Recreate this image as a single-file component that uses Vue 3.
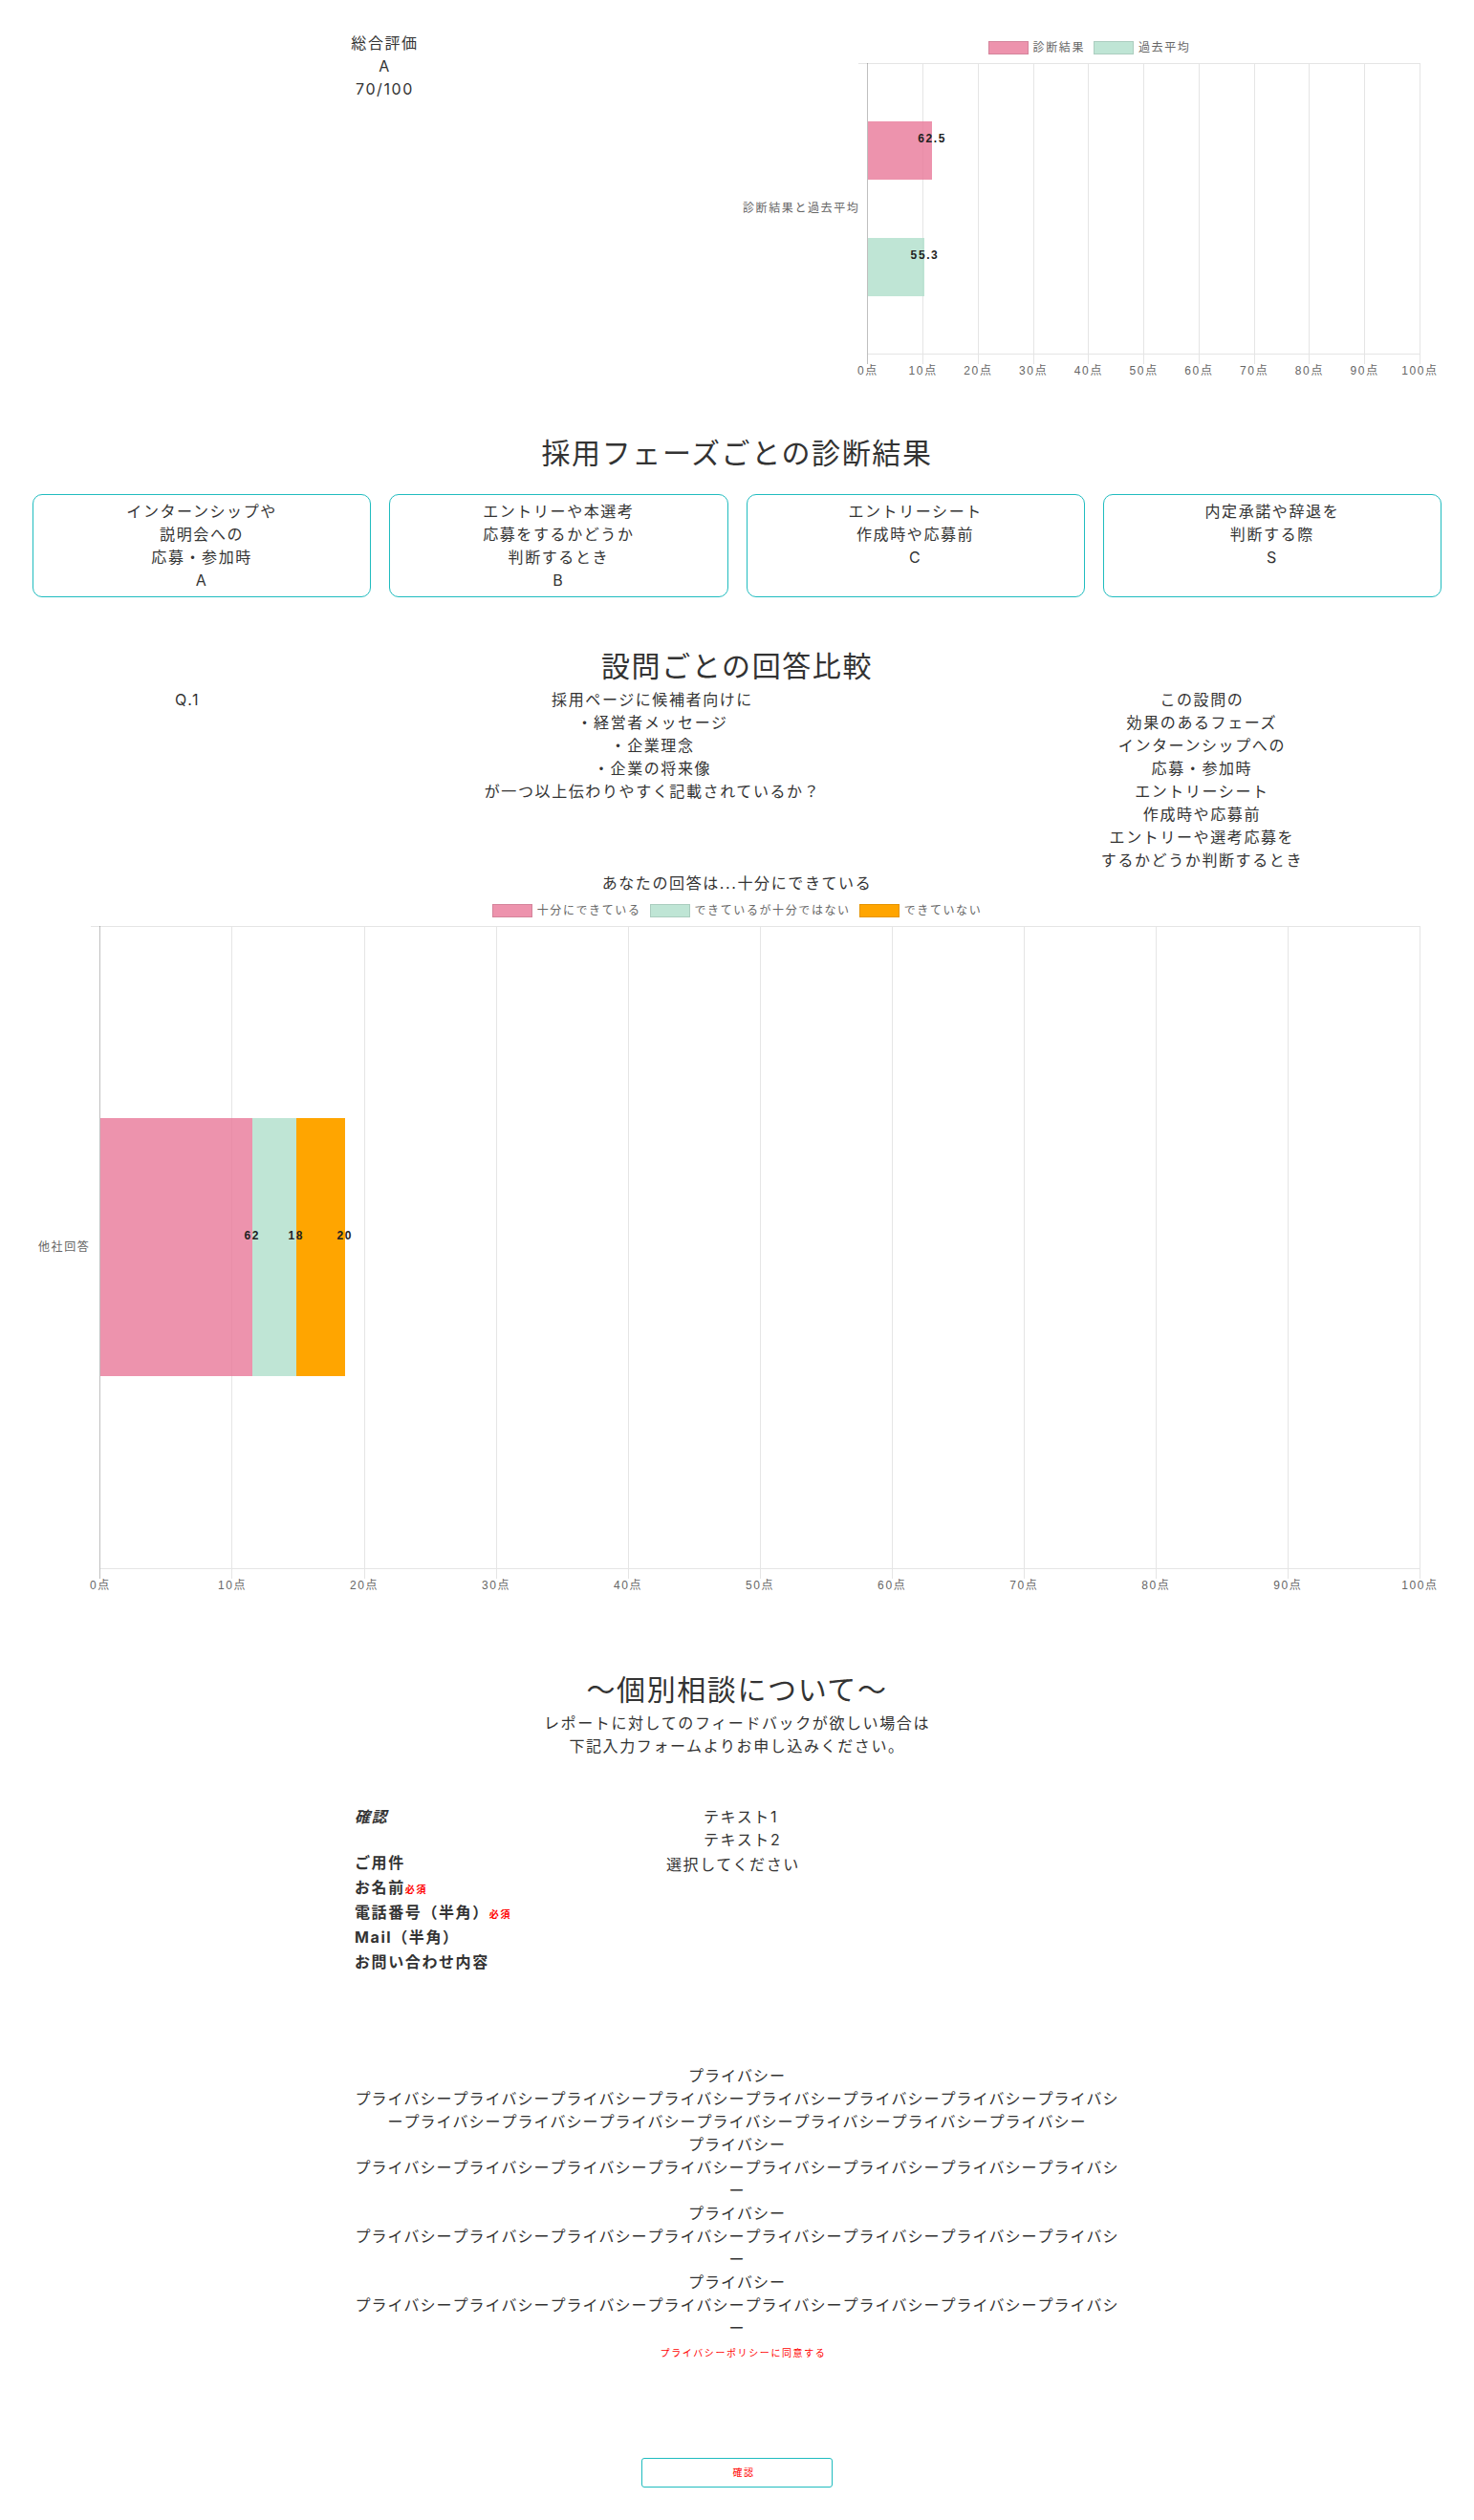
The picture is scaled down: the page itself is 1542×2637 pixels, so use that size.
<script setup>
import { ref } from 'vue'

// One data unit covers 0.185% of the plotted axis
const SCALE = 0.185
const ticks = [0, 10, 20, 30, 40, 50, 60, 70, 80, 90, 100]
const pct = (v) => v * SCALE + '%'

const scores = [
  { label: '診断結果', value: 62.5, tone: 'pink' },
  { label: '過去平均', value: 55.3, tone: 'green' },
]
const answers = [
  { label: '十分にできている', value: 62, tone: 'pink' },
  { label: 'できているが十分ではない', value: 18, tone: 'green' },
  { label: 'できていない', value: 20, tone: 'orange' },
]
const phases = [
  { lines: ['インターンシップや', '説明会への', '応募・参加時'], rank: 'A' },
  { lines: ['エントリーや本選考', '応募をするかどうか', '判断するとき'], rank: 'B' },
  { lines: ['エントリーシート', '作成時や応募前'], rank: 'C' },
  { lines: ['内定承諾や辞退を', '判断する際'], rank: 'S' },
]
const question = [
  '採用ページに候補者向けに',
  '・経営者メッセージ',
  '・企業理念',
  '・企業の将来像',
  'が一つ以上伝わりやすく記載されているか？',
]
const effective = [
  'この設問の',
  '効果のあるフェーズ',
  'インターンシップへの',
  '応募・参加時',
  'エントリーシート',
  '作成時や応募前',
  'エントリーや選考応募を',
  'するかどうか判断するとき',
]
const word = 'プライバシー'
const policies = [15, 8, 8, 8]

const kind = ref('')
const agreed = ref(false)
</script>

<template>
  <main class="page">
    <section class="summary">
      <div class="total">
        <p>総合評価</p>
        <p>A</p>
        <p>70/100</p>
      </div>
      <div class="chart">
        <div class="legend">
          <span v-for="s in scores" :key="s.label" class="legend-item">
            <i class="swatch" :class="s.tone"></i>{{ s.label }}
          </span>
        </div>
        <div class="chart-body">
          <div class="category">診断結果と過去平均</div>
          <div class="plot">
            <div class="grid"><i v-for="t in 10" :key="t"></i></div>
            <div class="bars grouped">
              <div v-for="s in scores" :key="s.label" class="bar" :class="s.tone" :style="{ width: pct(s.value) }">
                <b>{{ s.value }}</b>
              </div>
            </div>
          </div>
        </div>
        <div class="axis">
          <div class="category" aria-hidden="true">診断結果と過去平均</div>
          <div class="ticks"><span v-for="t in ticks" :key="t"><em>{{ t }}点</em></span></div>
        </div>
      </div>
    </section>

    <section class="block">
      <h2>採用フェーズごとの診断結果</h2>
      <div class="cards">
        <article v-for="p in phases" :key="p.rank" class="card">
          <p v-for="l in p.lines" :key="l">{{ l }}</p>
          <p>{{ p.rank }}</p>
        </article>
      </div>
    </section>

    <section class="block">
      <h2>設問ごとの回答比較</h2>
      <div class="question">
        <p>Q.1</p>
        <div><p v-for="l in question" :key="l">{{ l }}</p></div>
        <div><p v-for="l in effective" :key="l">{{ l }}</p></div>
      </div>
      <p>あなたの回答は...十分にできている</p>
      <div class="chart">
        <div class="legend">
          <span v-for="s in answers" :key="s.label" class="legend-item">
            <i class="swatch" :class="s.tone"></i>{{ s.label }}
          </span>
        </div>
        <div class="chart-body">
          <div class="category narrow">他社回答</div>
          <div class="plot">
            <div class="grid"><i v-for="t in 10" :key="t"></i></div>
            <div class="bars stacked">
              <div v-for="s in answers" :key="s.label" class="bar" :class="s.tone" :style="{ width: pct(s.value) }">
                <b>{{ s.value }}</b>
              </div>
            </div>
          </div>
        </div>
        <div class="axis">
          <div class="category narrow" aria-hidden="true">他社回答</div>
          <div class="ticks"><span v-for="t in ticks" :key="t"><em>{{ t }}点</em></span></div>
        </div>
      </div>
    </section>

    <section class="block contact">
      <h2>〜個別相談について〜</h2>
      <p>レポートに対してのフィードバックが欲しい場合は</p>
      <p>下記入力フォームよりお申し込みください。</p>

      <form class="form" @submit.prevent>
        <div class="row">
          <strong class="slant">確認</strong>
          <div class="texts">
            <p>テキスト1</p>
            <p>テキスト2</p>
          </div>
        </div>
        <div class="row">
          <label for="kind">ご用件</label>
          <select id="kind" v-model="kind">
            <option value="">選択してください</option>
          </select>
        </div>
        <div class="row">
          <label for="name">お名前<small>必須</small></label>
          <input id="name" type="text" />
        </div>
        <div class="row">
          <label for="tel">電話番号（半角）<small>必須</small></label>
          <input id="tel" type="tel" />
        </div>
        <div class="row">
          <label for="mail">Mail（半角）</label>
          <input id="mail" type="email" />
        </div>
        <div class="row message">
          <label for="message">お問い合わせ内容</label>
          <textarea id="message"></textarea>
        </div>

        <div class="privacy">
          <template v-for="(n, i) in policies" :key="i">
            <p>{{ word }}</p>
            <p>{{ word.repeat(n) }}</p>
          </template>
        </div>
        <div class="agree">
          <input id="agree" v-model="agreed" type="checkbox" />
          <label for="agree">プライバシーポリシーに同意する</label>
        </div>
        <button type="submit" class="submit">確認</button>
      </form>
    </section>
  </main>
</template>

<style>
body {
  margin: 0;
  background: #fff;
}
</style>

<style scoped>
.page {
  box-sizing: border-box;
  padding: 33px 34px 34px;
  color: #333;
  font: 16px/24px Inter, "Noto Sans CJK JP", sans-serif;
  letter-spacing: 0.1em;
  text-align: center;
}
p,
h2 {
  margin: 0;
}
h2 {
  font-size: 30px;
  line-height: 45px;
  font-weight: 400;
}
.summary {
  display: grid;
  grid-template-columns: 1fr 1fr;
  align-items: start;
}
.block {
  padding-top: 50px;
}
.cards {
  display: grid;
  grid-template-columns: repeat(4, 1fr);
  gap: 19px;
  margin-top: 20px;
}
.card {
  border: 1px solid #20bcbf;
  border-radius: 10px;
  padding: 5px;
}
.question {
  display: grid;
  grid-template-columns: 22% 44% 34%;
}

/* charts */
.chart {
  display: flex;
  flex-direction: column;
  box-sizing: border-box;
  aspect-ratio: 2;
  padding: 9px 22px 7px 6px;
  font: 12px/16px "Liberation Sans", "Noto Sans CJK JP", sans-serif;
  color: #666;
}
.legend {
  display: flex;
  justify-content: center;
  gap: 9px;
  margin: 0 -16px 8px 0;
}
.legend-item {
  display: flex;
  align-items: center;
  gap: 5px;
}
.swatch {
  box-sizing: border-box;
  width: 42px;
  height: 14px;
  border: 1px solid rgba(0, 0, 0, 0.1);
}
.pink {
  background-color: rgba(232, 120, 152, 0.8);
}
.green {
  background-color: rgba(175, 222, 202, 0.8);
}
.orange {
  background-color: orange;
}
.chart-body {
  flex: 1;
  display: flex;
  align-items: center;
}
.category {
  flex: none;
  padding-right: 8px;
  white-space: nowrap;
}
.category.narrow {
  padding-right: 10px;
}
.chart-body .plot {
  position: relative;
  align-self: stretch;
  flex: 1;
  border-left: 1px solid rgba(0, 0, 0, 0.25);
}
.grid {
  box-sizing: border-box;
  display: grid;
  grid-template-columns: repeat(10, 1fr);
  height: 100%;
  border: solid rgba(0, 0, 0, 0.1);
  border-width: 1px 0;
}
.grid i {
  border-right: 1px solid rgba(0, 0, 0, 0.1);
}
.plot::before {
  content: "";
  position: absolute;
  left: -10px;
  top: 0;
  width: 10px;
  height: 1px;
  background: rgba(0, 0, 0, 0.1);
}
.bars {
  position: absolute;
  inset: 0;
  display: flex;
}
.grouped {
  flex-direction: column;
  justify-content: space-evenly;
}
.grouped .bar {
  height: 20%;
}
.stacked {
  align-items: center;
}
.stacked .bar {
  height: 40%;
}
.bar {
  position: relative;
}
.bar b {
  position: absolute;
  right: 0;
  top: 50%;
  z-index: 1;
  transform: translate(50%, -20px);
  color: #222;
}
.axis {
  display: flex;
}
.axis .category {
  height: 0;
  visibility: hidden;
}
.ticks {
  flex: 1;
  display: flex;
  justify-content: space-between;
}
.ticks span {
  display: flex;
  flex-direction: column;
  align-items: center;
  width: 1px;
}
.ticks span::before {
  content: "";
  width: 1px;
  height: 10px;
  background: rgba(0, 0, 0, 0.1);
}
.ticks span:first-child::before {
  background: rgba(0, 0, 0, 0.25);
}
.ticks em {
  font-style: normal;
  line-height: 14px;
  white-space: nowrap;
}

/* contact form */
.contact {
  padding-top: 73px;
}
.form {
  max-width: 800px;
  margin: 50px auto 0;
}
.row {
  display: grid;
  grid-template-columns: 326px 1fr;
  min-height: 26px;
  text-align: left;
}
.row label,
.row strong {
  font-weight: 700;
}
.slant {
  font-style: italic;
}
.texts {
  padding-left: 39px;
}
.row:first-child {
  min-height: 48px;
}
small {
  font-size: 10px;
  color: red;
}
select,
input,
textarea {
  appearance: none;
  box-sizing: border-box;
  margin: 0;
  border: 0;
  padding: 0;
  outline: 0;
  background: none;
  color: inherit;
  font: inherit;
  letter-spacing: inherit;
  resize: none;
}
select {
  align-self: end;
  height: 24px;
}
.message {
  height: 119px;
}
.privacy {
  letter-spacing: 1px;
  font-kerning: none;
  word-break: break-all;
}
.agree {
  display: flex;
  justify-content: center;
  padding-top: 2px;
  font-size: 10px;
  color: red;
}
.agree input {
  width: 13px;
}
.submit {
  display: block;
  box-sizing: border-box;
  width: 200px;
  height: 31px;
  margin: 98px auto 0;
  padding: 0 0 0 14px;
  border: 1px solid #20bcbf;
  border-radius: 3px;
  background: #fff;
  color: red;
  font: inherit;
  font-size: 10px;
  letter-spacing: inherit;
}
</style>
